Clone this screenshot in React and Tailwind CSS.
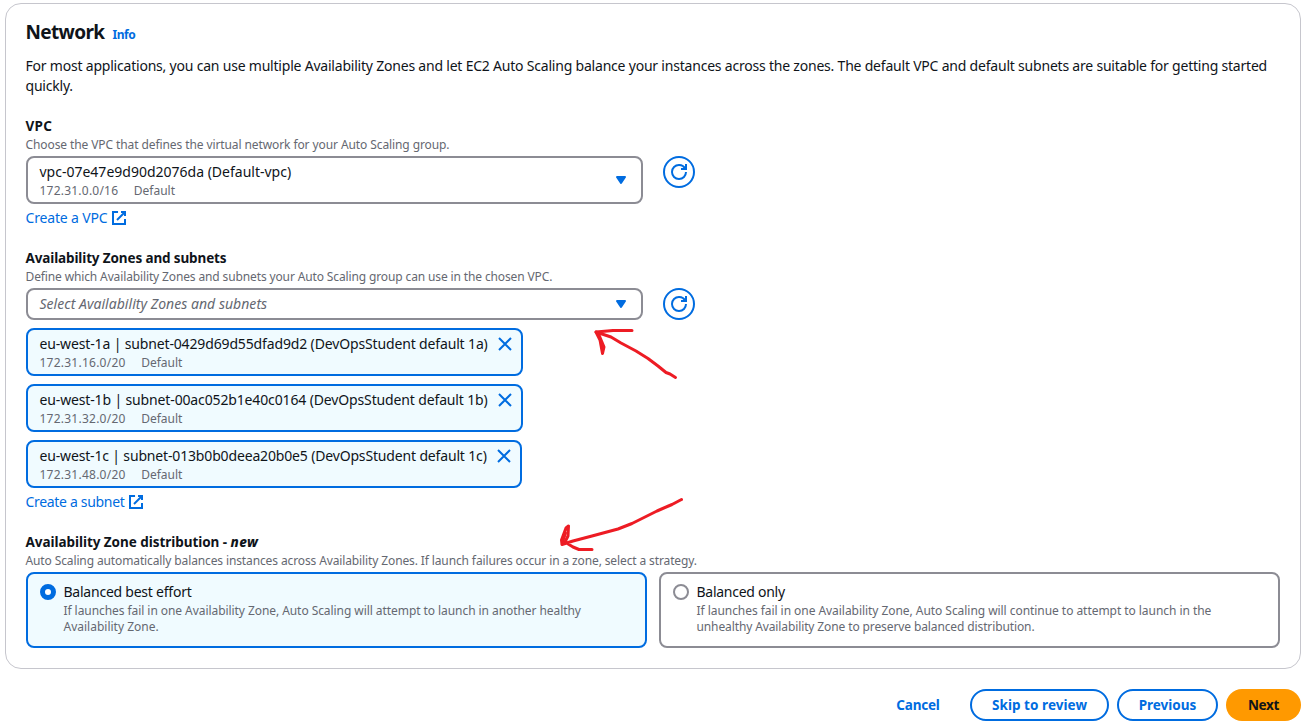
const ACCENT = "text-[#006ce0]";

function ExternalIcon() {
  return (
    <svg className="h-4 w-4 shrink-0" viewBox="0 0 16 16" fill="none" stroke="currentColor" strokeWidth="2">
      <path d="M10 2h4v4" />
      <path d="m6 10 8-8" />
      <path d="M14 9.048V14H2V2h5.04" />
    </svg>
  );
}

function CloseIcon() {
  return (
    <svg className="h-4 w-4 shrink-0 text-[#006ce0]" viewBox="0 0 16 16" fill="none" stroke="currentColor" strokeWidth="2">
      <path d="m2 2 12 12M14 2 2 14" />
    </svg>
  );
}

function Caret() {
  return (
    <svg className="h-4 w-4 shrink-0 text-[#006ce0]" viewBox="0 0 16 16" fill="currentColor" stroke="currentColor" strokeWidth="2" strokeLinejoin="round">
      <path d="M4 5h8l-4 6-4-6z" />
    </svg>
  );
}

function RefreshButton() {
  return (
    <button className="flex h-8 w-8 shrink-0 items-center justify-center rounded-full border-2 border-[#006ce0] text-[#006ce0]">
      <svg className="h-4 w-4" viewBox="0 0 16 16" fill="none" stroke="currentColor" strokeWidth="2">
        <path d="M10 5h5V0" />
        <path d="M15 8a6.957 6.957 0 0 1-7 7 6.957 6.957 0 0 1-7-7 6.957 6.957 0 0 1 7-7 6.87 6.87 0 0 1 6.3 4" />
      </svg>
    </button>
  );
}

function FieldHeader({ children, hint, hintClass }) {
  return (
    <div className="-ml-[0.5px] whitespace-nowrap">
      <div className="h-5 text-[13.5px] font-bold leading-5">{children}</div>
      <div className={"h-5 text-xs leading-[18px] text-[#656871] " + hintClass}>{hint}</div>
    </div>
  );
}

function Meta({ ip, ipClass }) {
  return (
    <div className="flex h-4 gap-[15.5px] text-xs leading-[18px] text-[#656871]">
      <span className={ipClass}>{ip}</span>
      <span>Default</span>
    </div>
  );
}

function Token({ name, ip, width, nameClass }) {
  return (
    <div className={"flex h-12 justify-between rounded-lg border-2 border-[#006ce0] bg-[#f0fbff] pl-[11.5px] pr-2 pt-1 " + width}>
      <div className="whitespace-nowrap">
        <div className={"h-5 text-sm leading-5 " + nameClass}>{name}</div>
        <Meta ip={ip} ipClass="tracking-[0.24px]" />
      </div>
      <div className="pt-[2px]">
        <CloseIcon />
      </div>
    </div>
  );
}

function Tile({ selected, title, titleClass, children }) {
  return (
    <div
      className={
        "flex h-[76px] flex-1 gap-[7.5px] rounded-lg border-2 pl-3 pt-2 " +
        (selected ? "border-[#006ce0] bg-[#f0fbff]" : "border-[#8c8c94] bg-white")
      }
    >
      <div
        className={
          "mt-[2px] h-4 w-4 shrink-0 rounded-full bg-white " +
          (selected ? "border-[5px] border-[#006ce0]" : "border-2 border-[#8c8c94]")
        }
      />
      <div className="whitespace-nowrap">
        <div className={"h-5 text-sm leading-5 " + titleClass}>{title}</div>
        <div className="pt-px text-xs leading-4 text-[#656871]">{children}</div>
      </div>
    </div>
  );
}

function Arrows() {
  return (
    <svg className="pointer-events-none absolute left-0 top-0" width="1309" height="725" fill="none" stroke="#ed1c24" strokeWidth="3" strokeLinecap="round" strokeLinejoin="round">
      <path d="M632 330.500H613L596 332L600 340L602.500 353.500L604 347L599 335" />
      <path d="M596 332L611 337L621 343L636 351L648 358.500L658 366L666 372.500L670 374L675.500 377.500" />
      <path d="M681.500 499.500L672 504.500L657 511L632 523.500L618 529L592 536L573 541L562 544.500L561.500 540L566 528L568.500 526L568 536L565 542L573 547L579 549.500H592" />
      <path d="M562.500 542l3-9" />
    </svg>
  );
}

export default function App() {
  return (
    <div className="relative h-[725px] w-[1309px] overflow-hidden bg-white pl-[5px] pr-2 pt-[3px] font-['Noto_Sans',sans-serif] text-[#0f141a]">
      <section className="h-[666px] rounded-2xl border border-[#c6c6cd] px-5 pt-4">
        <header className="-ml-[0.5px] flex h-6 items-center gap-2">
          <h2 className="text-[19px] font-bold leading-6 tracking-[-0.65px]">Network</h2>
          <a className={"pt-[5px] text-xs font-bold leading-4 tracking-[-0.4px] " + ACCENT}>Info</a>
        </header>

        <p className="-ml-[0.5px] mt-3 whitespace-nowrap text-sm leading-5 tracking-[-0.208px]">
          For most applications, you can use multiple Availability Zones and let EC2 Auto Scaling balance your instances across the zones. The default VPC and default subnets are suitable for getting started
          <br />
          quickly.
        </p>

        <div className="mt-5">
          <FieldHeader hint="Choose the VPC that defines the virtual network for your Auto Scaling group." hintClass="tracking-[-0.095px]">
            <span className="tracking-[0.3px]">VPC</span>
          </FieldHeader>
          <div className="flex gap-5">
            <div className="flex h-12 w-[617px] items-center justify-between rounded-lg border-2 border-[#8c8c94] pl-[11.5px] pr-3">
              <div className="h-10 whitespace-nowrap pt-[2px]">
                <div className="h-5 text-sm leading-5">vpc-07e47e9d90d2076da (Default-vpc)</div>
                <Meta ip="172.31.0.0/16" ipClass="tracking-[0.22px]" />
              </div>
              <Caret />
            </div>
            <RefreshButton />
          </div>
          <a className={"-ml-[0.5px] mt-1 flex h-5 items-center gap-[3.5px] text-sm leading-5 tracking-[-0.16px] " + ACCENT}>
            Create a VPC
            <ExternalIcon />
          </a>
        </div>

        <div className="mt-5">
          <FieldHeader hint="Define which Availability Zones and subnets your Auto Scaling group can use in the chosen VPC." hintClass="tracking-[-0.13px]">
            <span className="tracking-[-0.128px]">Availability Zones and subnets</span>
          </FieldHeader>
          <div className="flex gap-5">
            <div className="flex h-8 w-[617px] items-center justify-between rounded-lg border-2 border-[#8c8c94] pl-[11.5px] pr-3">
              <span className="text-sm italic leading-5 tracking-[0.03px] text-[#656871]">Select Availability Zones and subnets</span>
              <Caret />
            </div>
            <RefreshButton />
          </div>
          <div className="mt-2 flex flex-col gap-2">
            <Token width="w-[497px]" nameClass="tracking-[-0.145px]" name="eu-west-1a | subnet-0429d69d55dfad9d2 (DevOpsStudent default 1a)" ip="172.31.16.0/20" />
            <Token width="w-[497px]" nameClass="tracking-[-0.139px]" name="eu-west-1b | subnet-00ac052b1e40c0164 (DevOpsStudent default 1b)" ip="172.31.32.0/20" />
            <Token width="w-[496px]" nameClass="tracking-[-0.16px]" name="eu-west-1c | subnet-013b0b0deea20b0e5 (DevOpsStudent default 1c)" ip="172.31.48.0/20" />
          </div>
          <a className={"-ml-[0.5px] mt-1 flex h-5 items-center gap-[3.5px] text-sm leading-5 tracking-[-0.32px] " + ACCENT}>
            Create a subnet
            <ExternalIcon />
          </a>
        </div>

        <div className="mt-5">
          <FieldHeader
            hint="Auto Scaling automatically balances instances across Availability Zones. If launch failures occur in a zone, select a strategy."
            hintClass="tracking-[-0.12px]"
          >
            <span className="tracking-[-0.049px]">Availability Zone distribution - </span>
            <em className="font-extrabold tracking-[0.4px]">new</em>
          </FieldHeader>
          <div className="flex gap-3">
            <Tile selected title="Balanced best effort" titleClass="tracking-[-0.234px]">
              <span className="tracking-[-0.065px]">If launches fail in one Availability Zone, Auto Scaling will attempt to launch in another healthy</span>
              <br />
              Availability Zone.
            </Tile>
            <Tile title="Balanced only" titleClass="tracking-[-0.27px]">
              <span className="tracking-[-0.05px]">If launches fail in one Availability Zone, Auto Scaling will continue to attempt to launch in the</span>
              <br />
              <span className="tracking-[-0.114px]">unhealthy Availability Zone to preserve balanced distribution.</span>
            </Tile>
          </div>
        </div>
      </section>

      <footer className="mt-5 flex justify-end text-[13.5px] font-bold leading-5">
        <button className="mr-2 flex h-8 w-[88px] items-center justify-center tracking-[-0.2px] text-[#006ce0]">Cancel</button>
        <button className="mr-2 flex h-8 w-[139px] items-center justify-center rounded-full border-2 border-[#006ce0] tracking-[0.05px] text-[#006ce0]">Skip to review</button>
        <button className="mr-2 flex h-8 w-[101px] items-center justify-center rounded-full border-2 border-[#006ce0] text-[#006ce0]">Previous</button>
        <button className="flex h-8 w-[75px] items-center justify-center rounded-full bg-[#ff9900] tracking-[-0.35px]">Next</button>
      </footer>

      <Arrows />
    </div>
  );
}
